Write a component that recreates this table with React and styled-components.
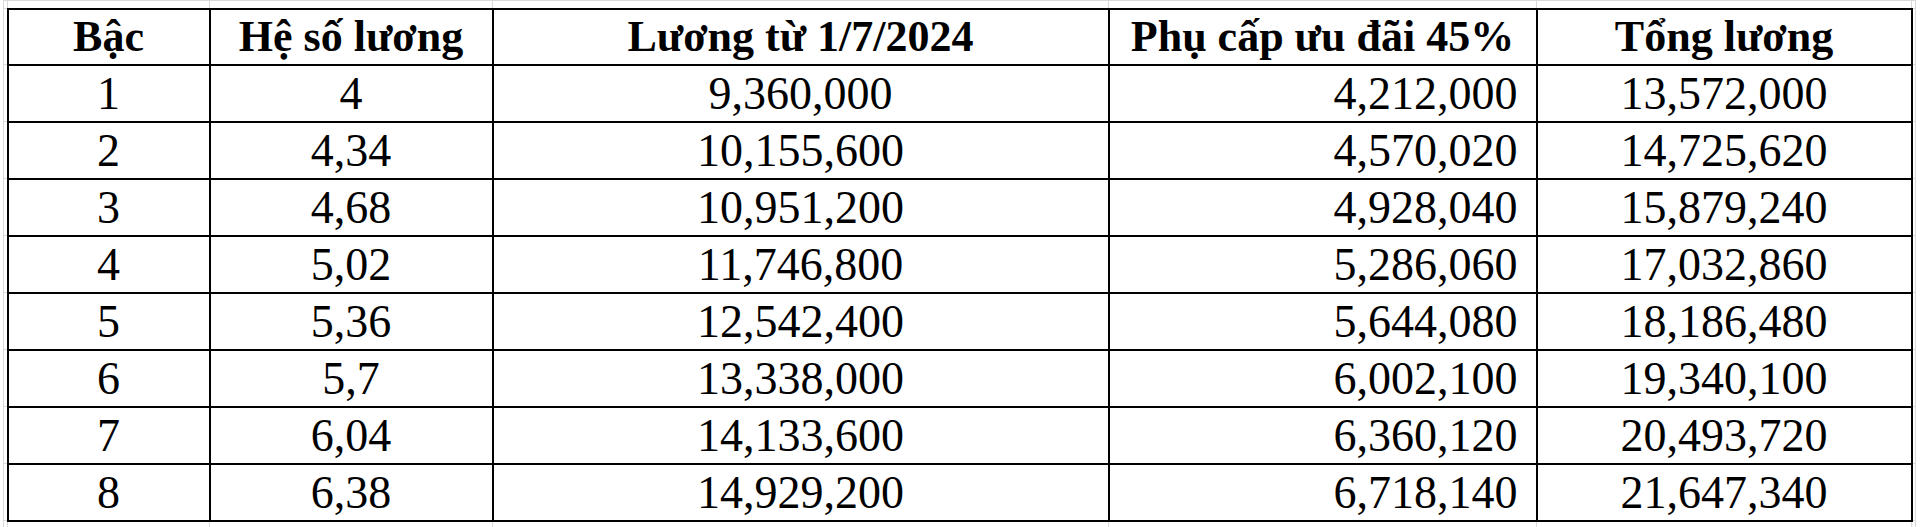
import React from 'react'
import styled, { createGlobalStyle } from 'styled-components'

const GlobalStyle = createGlobalStyle`
  html, body {
    margin: 0;
    padding: 0;
    background: #fff;
  }
`

const columns = [
  { title: 'Bậc', width: 202, align: 'center' },
  { title: 'Hệ số lương', width: 283, align: 'center' },
  { title: 'Lương từ 1/7/2024', width: 616, align: 'center' },
  { title: 'Phụ cấp ưu đãi 45%', width: 428, align: 'right' },
  { title: 'Tổng lương', width: 375, align: 'center' },
]

const rows = [
  ['1', '4', '9,360,000', '4,212,000', '13,572,000'],
  ['2', '4,34', '10,155,600', '4,570,020', '14,725,620'],
  ['3', '4,68', '10,951,200', '4,928,040', '15,879,240'],
  ['4', '5,02', '11,746,800', '5,286,060', '17,032,860'],
  ['5', '5,36', '12,542,400', '5,644,080', '18,186,480'],
  ['6', '5,7', '13,338,000', '6,002,100', '19,340,100'],
  ['7', '6,04', '14,133,600', '6,360,120', '20,493,720'],
  ['8', '6,38', '14,929,200', '6,718,140', '21,647,340'],
]

function App() {
  return (
    <Sheet>
      <GlobalStyle />
      <Grid>
        <colgroup>
          <col style={{ width: 4 }} />
          {columns.map((c) => (
            <col key={c.title} style={{ width: c.width }} />
          ))}
          <col style={{ width: 4 }} />
        </colgroup>
        <tbody>
          <GutterRow $h={8}>
            <Gutter />
            {columns.map((c) => (
              <Gutter key={c.title} />
            ))}
            <Gutter />
          </GutterRow>
          <HeadRow>
            <Gutter />
            {columns.map((c) => (
              <Head key={c.title}>{c.title}</Head>
            ))}
            <Gutter />
          </HeadRow>
          {rows.map((r) => (
            <BodyRow key={r[0]}>
              <Gutter />
              {r.map((v, i) => (
                <Cell key={i} $align={columns[i].align}>
                  {v}
                </Cell>
              ))}
              <Gutter />
            </BodyRow>
          ))}
          <GutterRow $h={10}>
            <Gutter />
            {columns.map((c) => (
              <Gutter key={c.title} />
            ))}
            <Gutter />
          </GutterRow>
        </tbody>
      </Grid>
    </Sheet>
  )
}

const Sheet = styled.div`
  width: 1920px;
  height: 527px;
  overflow: hidden;
  background: #fff;
  padding-left: 3px;
  box-sizing: border-box;
`

const Grid = styled.table`
  border-collapse: collapse;
  table-layout: fixed;
  font-family: "Liberation Serif", "Times New Roman", serif;
  color: #000;
`

const GutterRow = styled.tr`
  height: ${(p) => p.$h}px;
`

const HeadRow = styled.tr`
  height: 56px;
`

const BodyRow = styled.tr`
  height: 57px;
`

const Gutter = styled.td`
  border: 1px solid #d9d9d9;
  padding: 0;
`

const Head = styled.td`
  border: 2px solid #000;
  padding: 0 4px 1px;
  text-align: center;
  vertical-align: bottom;
  font-weight: 700;
  font-size: 44px;
  line-height: 52px;
  white-space: nowrap;
`

const Cell = styled.td`
  border: 2px solid #000;
  padding: 0 ${(p) => (p.$align === 'right' ? '18px' : '4px')} 1px 4px;
  text-align: ${(p) => p.$align};
  vertical-align: bottom;
  font-size: 46px;
  line-height: 52px;
  white-space: nowrap;
`

export default App
